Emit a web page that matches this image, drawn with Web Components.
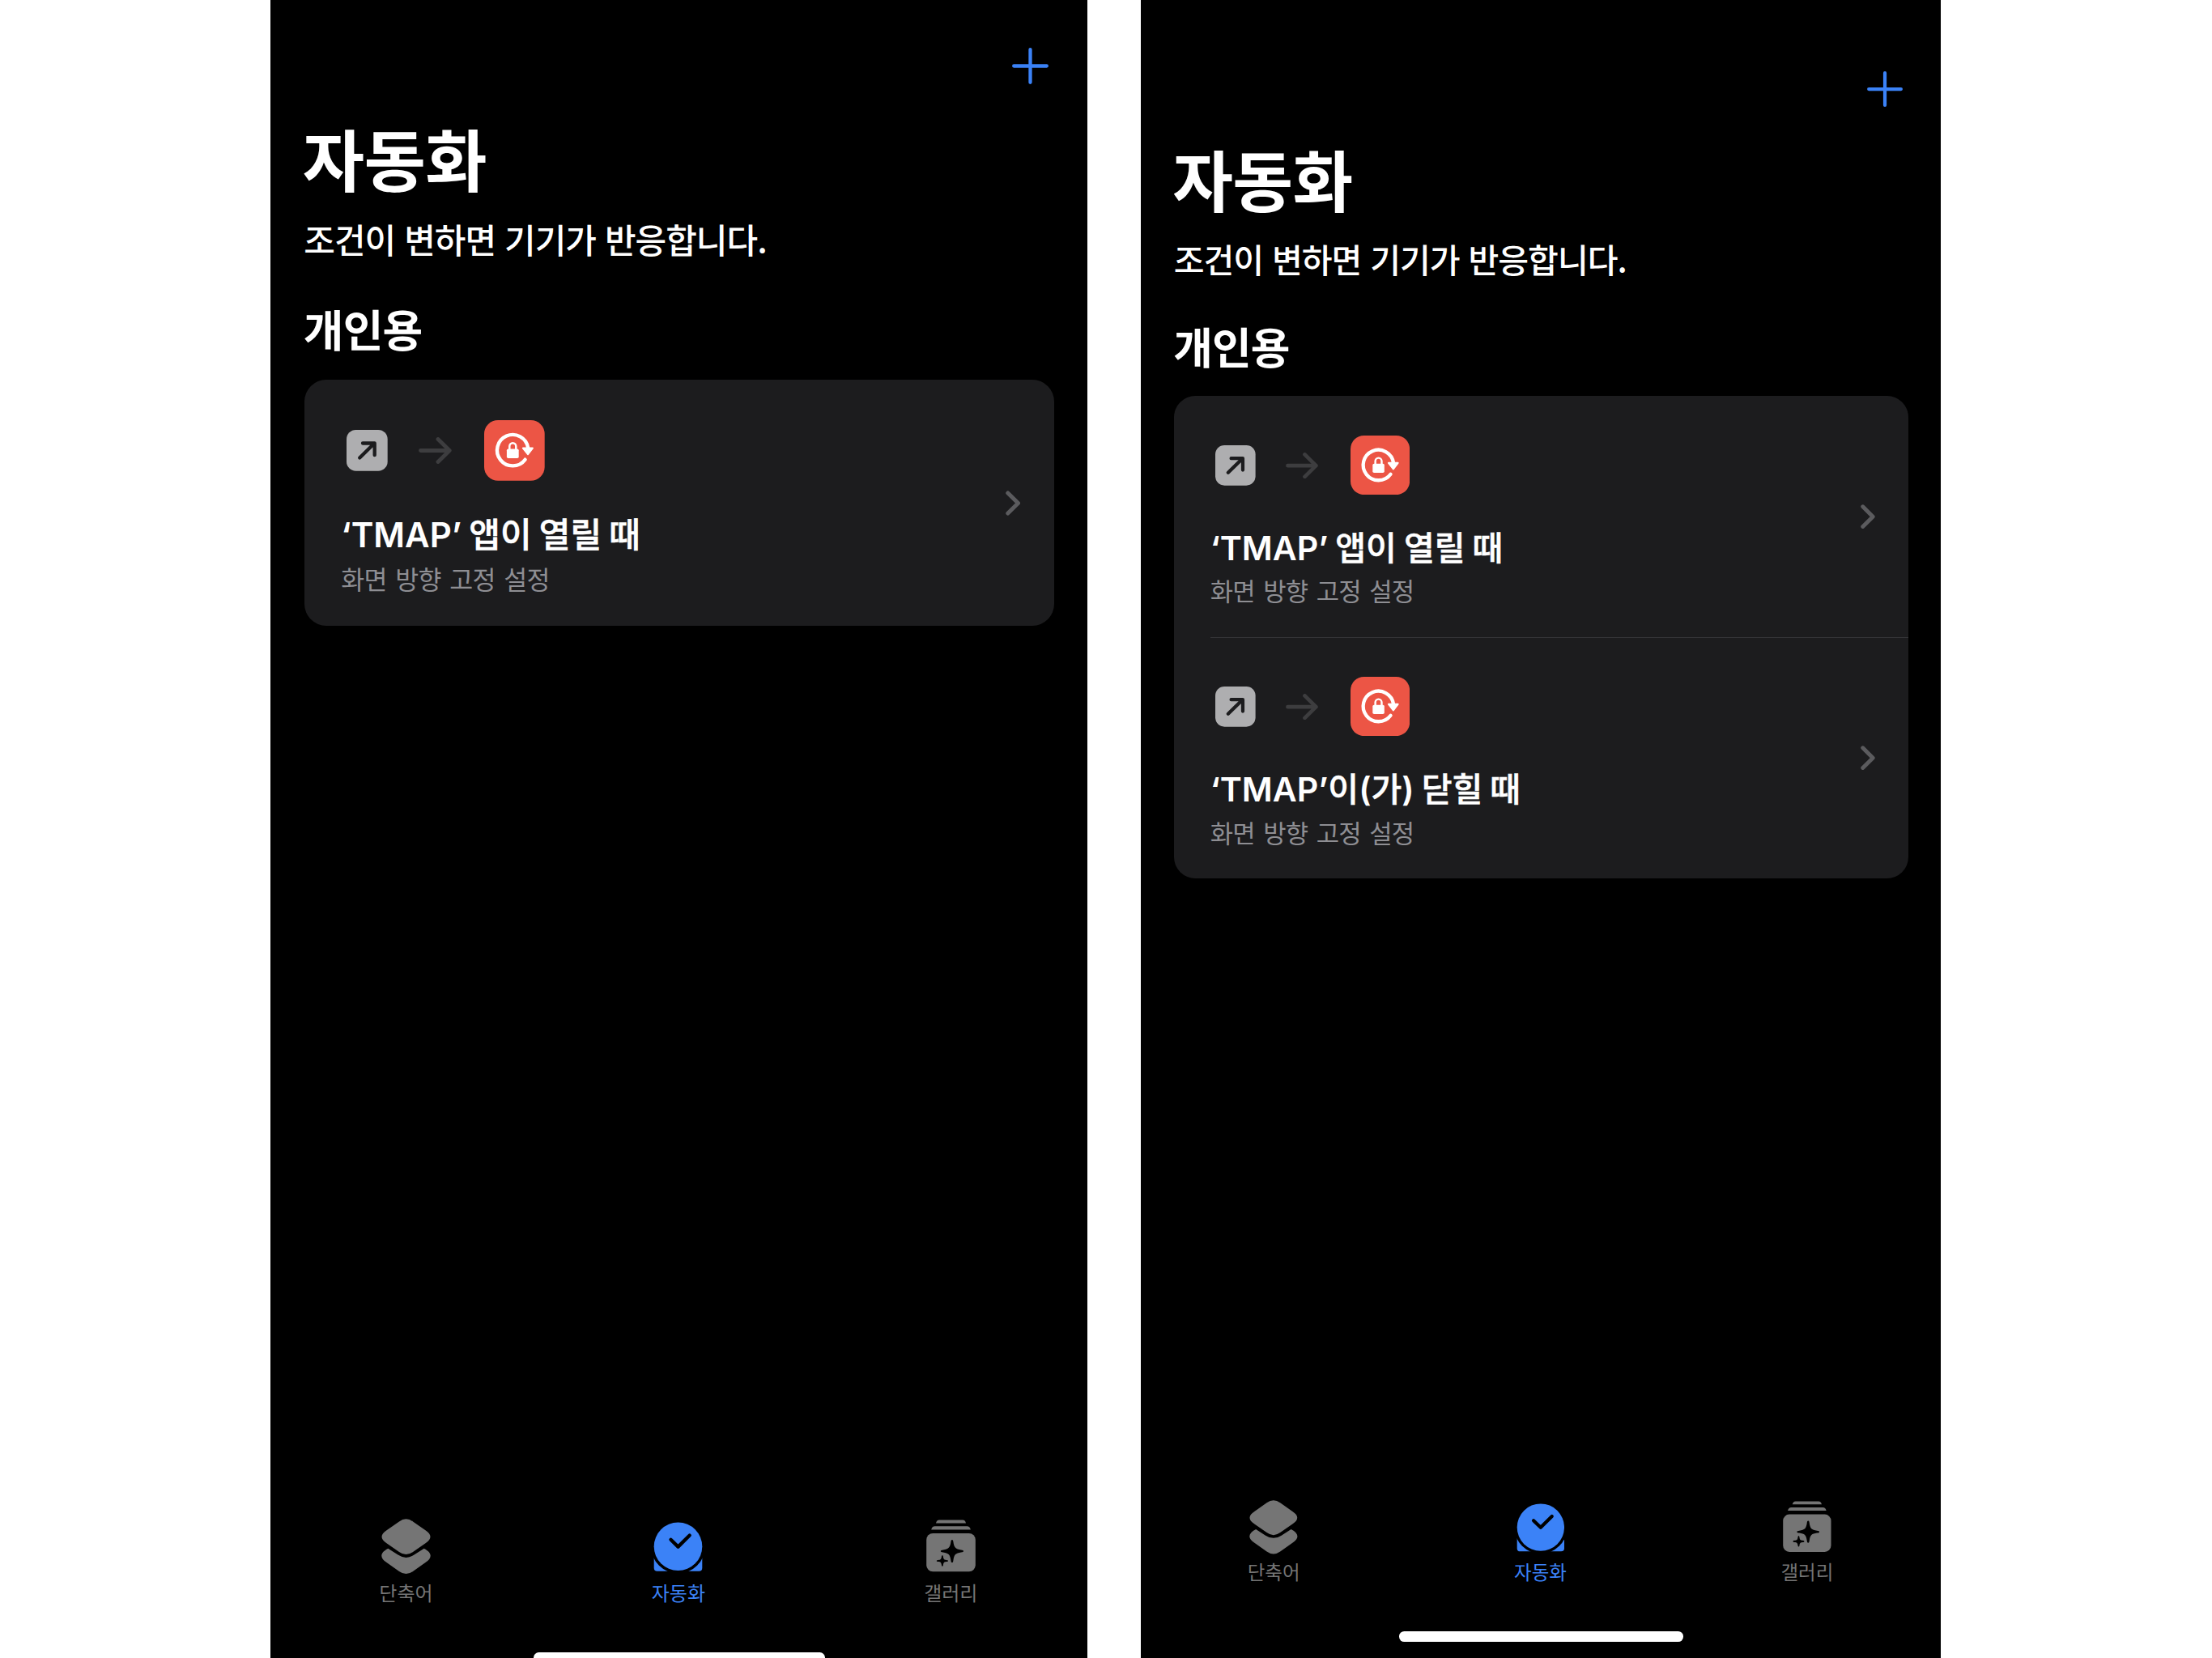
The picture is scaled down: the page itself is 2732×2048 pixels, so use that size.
<!DOCTYPE html>
<html lang="ko">
<head>
<meta charset="utf-8">
<title>자동화</title>
<style>
    body {
        margin: 0;
        height: 2048px;
        padding-left: 334.3px;
        display: flex;
        gap: 66px;
        background: #fff;
        overflow: hidden;
    }

    phone-screen.first {
        --u: 1px;
        --top: 0px;
        --foot: -6.3px;
    }

    phone-screen.second {
        --u: .979px;
        --top: 30px;
        --foot: 20.3px;
    }
</style>
</head>
<body>

<phone-screen class="first">
    <automation-list heading="개인용">
        <automation-row label="‘TMAP’ 앱이 열릴 때" action="화면 방향 고정 설정"></automation-row>
    </automation-list>
</phone-screen>

<phone-screen class="second">
    <automation-list heading="개인용">
        <automation-row label="‘TMAP’ 앱이 열릴 때" action="화면 방향 고정 설정"></automation-row>
        <automation-row label="‘TMAP’이(가) 닫힐 때" action="화면 방향 고정 설정"></automation-row>
    </automation-list>
</phone-screen>

<script>
// every length is a multiple of --u, so a screen scales as a whole
customElements.define('phone-screen', class extends HTMLElement {

    constructor() {
        super();
        let shadowRoot = this.attachShadow({mode: 'open'});
        shadowRoot.innerHTML = `
            <style>
                :host {
                    display: flex;
                    flex-direction: column;
                    box-sizing: border-box;
                    width: calc(var(--u) * 1009.2);
                    height: 2048px;
                    padding-top: var(--top);
                    overflow: hidden;
                    background: #000;
                    color: #fff;
                    font-family: Inter, "Noto Sans CJK KR", sans-serif;
                    white-space: nowrap;
                }

                nav {
                    box-sizing: border-box;
                    height: calc(var(--u) * 143.8);
                    padding: calc(var(--u) * 58.9) calc(var(--u) * 48.2) 0 0;
                    display: flex;
                    justify-content: flex-end;
                }

                nav svg {
                    width: calc(var(--u) * 45);
                    height: calc(var(--u) * 45);
                }

                main {
                    padding: 0 calc(var(--u) * 41.5);
                }

                h1, p {
                    margin: 0;
                    font-family: "Noto Sans CJK KR", sans-serif;
                }

                h1 {
                    font-size: calc(var(--u) * 83);
                    line-height: calc(var(--u) * 100);
                    font-weight: 700;
                    letter-spacing: calc(var(--u) * -.6);
                    margin-left: calc(var(--u) * -2);
                }

                p {
                    margin-top: calc(var(--u) * 26.6);
                    font-size: calc(var(--u) * 42);
                    line-height: calc(var(--u) * 50);
                    font-weight: 500;
                    letter-spacing: calc(var(--u) * -1);
                    word-spacing: calc(var(--u) * .2);
                    margin-left: calc(var(--u) * -.5);
                }

                tab-bar {
                    margin: auto calc(var(--u) * 1) 0 calc(var(--u) * -1);
                }

                .home {
                    flex: none;
                    align-self: center;
                    width: calc(var(--u) * 359.5);
                    height: calc(var(--u) * 13);
                    margin: calc(var(--u) * 59.7) 0 var(--foot);
                    border-radius: calc(var(--u) * 6.5);
                    background: #fff;
                }
            </style>

            <nav>
                <svg viewBox="0 0 45 45" fill="none" stroke="#3b82f7" stroke-width="4.3" stroke-linecap="round">
                    <path d="M22.5 2.2v40.600M2.200 22.500h40.600"/>
                </svg>
            </nav>
            <main>
                <h1>자동화</h1>
                <p>조건이 변하면 기기가 반응합니다.</p>
                <slot></slot>
            </main>
            <tab-bar></tab-bar>
            <div class="home"></div>
        `;
    }
});

customElements.define('automation-list', class extends HTMLElement {

    constructor() {
        super();
        let shadowRoot = this.attachShadow({mode: 'open'});
        shadowRoot.innerHTML = `
            <style>
                :host {
                    display: block;
                }

                h2 {
                    margin: calc(var(--u) * 55.4) 0 calc(var(--u) * 33) calc(var(--u) * -1);
                    font-family: "Noto Sans CJK KR", sans-serif;
                    font-size: calc(var(--u) * 54);
                    line-height: calc(var(--u) * 60);
                    font-weight: 700;
                    letter-spacing: calc(var(--u) * -.8);
                }

                .card {
                    border-radius: calc(var(--u) * 27);
                    background: #1c1c1e;
                    overflow: hidden;
                }

                ::slotted(automation-row:not(:first-child)) {
                    --divider: #343437;
                }
            </style>

            <h2></h2>
            <div class="card"><slot></slot></div>
        `;
    }

    connectedCallback() {
        this.shadowRoot.querySelector('h2').textContent = this.getAttribute('heading');
    }
});

customElements.define('automation-row', class extends HTMLElement {

    constructor() {
        super();
        let shadowRoot = this.attachShadow({mode: 'open'});
        shadowRoot.innerHTML = `
            <style>
                :host {
                    display: block;
                    padding-left: calc(var(--u) * 45.5);
                }

                .row {
                    box-sizing: border-box;
                    height: calc(var(--u) * 304.5);
                    padding: calc(var(--u) * 49.3) calc(var(--u) * 41.6) 0 0;
                    border-top: 1px solid var(--divider, transparent);
                    display: grid;
                    grid-template-columns: 1fr auto;
                }

                .flow {
                    display: flex;
                    align-items: center;
                    height: calc(var(--u) * 74.7);
                    padding-left: calc(var(--u) * 6.8);
                }

                svg {
                    display: block;
                    flex: none;
                }

                .trigger {
                    width: calc(var(--u) * 50.7);
                    height: calc(var(--u) * 50.7);
                }

                .arrow {
                    width: calc(var(--u) * 41);
                    height: calc(var(--u) * 33);
                    margin: calc(var(--u) * 1) calc(var(--u) * 40.8) 0 calc(var(--u) * 37.8);
                }

                .lock {
                    width: calc(var(--u) * 74.7);
                    height: calc(var(--u) * 74.7);
                }

                .label {
                    margin-top: calc(var(--u) * 42.7);
                    font-size: calc(var(--u) * 42);
                    line-height: calc(var(--u) * 50);
                    font-weight: 600;
                    word-spacing: calc(var(--u) * -1.4);
                }

                /* Noto has no semibold, so medium gets a thin outline */
                .label span {
                    font-weight: 500;
                    -webkit-text-stroke: calc(var(--u) * .6) currentColor;
                }

                .action {
                    margin-top: calc(var(--u) * 7.6);
                    font-family: "Noto Sans CJK KR", sans-serif;
                    font-size: calc(var(--u) * 31.5);
                    line-height: calc(var(--u) * 40);
                    letter-spacing: calc(var(--u) * -.8);
                    word-spacing: calc(var(--u) * 2.6);
                    color: #8e8e93;
                }

                .chevron {
                    width: calc(var(--u) * 18.5);
                    height: calc(var(--u) * 31);
                    margin-top: calc(var(--u) * 86.5);
                }
            </style>

            <div class="row">
                <div>
                    <div class="flow">
                        <svg class="trigger" viewBox="0 0 50.7 50.7">
                            <rect width="50.7" height="50.7" rx="11.5" fill="#aeaeb0"/>
                            <path d="M16.2 34.600L34.500 16.500M20 16.500h14.700v14.700" fill="none" stroke="#1c1c1e" stroke-width="4.3" stroke-linecap="round" stroke-linejoin="round"/>
                        </svg>
                        <svg class="arrow" viewBox="0 0 41 33" fill="none" stroke="#3d3d3f" stroke-width="4.8" stroke-linecap="round" stroke-linejoin="round">
                            <path d="M2.5 16.5h35.7M24 2.500l14.200 14L24 30.500"/>
                        </svg>
                        <svg class="lock" viewBox="0 0 74.7 74.7">
                            <rect width="74.7" height="74.7" rx="17" fill="#ec5545"/>
                            <path d="M50.6 48.700A19.200 19.200 0 1 1 54.200 34.400" fill="none" stroke="#fff" stroke-width="4.4" stroke-linecap="round"/>
                            <path d="M48 34.500h11.800L54 42.200z" fill="#fff" stroke="#fff" stroke-width="2.2" stroke-linejoin="round"/>
                            <rect x="27.9" y="35.4" width="14.8" height="11.6" rx="1.8" fill="#fff"/>
                            <path d="M31.300 36.500v-4.300a4 4 0 0 1 8 0v4.300" fill="none" stroke="#fff" stroke-width="2.5"/>
                        </svg>
                    </div>
                    <div class="label"></div>
                    <div class="action"></div>
                </div>
                <svg class="chevron" viewBox="0 0 18.5 31" fill="none" stroke="#5b5b5e" stroke-width="5" stroke-linecap="round" stroke-linejoin="round">
                    <path d="M2.800 2.900l12.700 12.600L2.800 28.100"/>
                </svg>
            </div>
        `;
    }

    connectedCallback() {
        const row = this.shadowRoot;

        row.querySelector('.label').innerHTML = this.getAttribute('label').replace(/[가-힣]+/g, '<span>$&</span>');
        row.querySelector('.action').textContent = this.getAttribute('action');
    }
});

customElements.define('tab-bar', class extends HTMLElement {

    constructor() {
        super();
        let shadowRoot = this.attachShadow({mode: 'open'});
        shadowRoot.innerHTML = `
            <style>
                :host {
                    display: grid;
                    grid-template-columns: repeat(3, 1fr);
                }

                .tab {
                    display: flex;
                    flex-direction: column;
                    align-items: center;
                    gap: calc(var(--u) * 6.6);
                    color: #757575;
                    font-family: "Noto Sans CJK KR", sans-serif;
                    font-size: calc(var(--u) * 24);
                    line-height: calc(var(--u) * 30);
                    font-weight: 400;
                }

                .tab.active {
                    color: #3b82f7;
                }

                svg {
                    width: calc(var(--u) * 61);
                    height: calc(var(--u) * 70);
                    fill: currentColor;
                }
            </style>

            <div class="tab">
                <svg viewBox="0 0 61 70">
                    <g transform="translate(.5 1)">
                        <path d="M21.5 3.4Q30 -2.8 38.5 3.4L54 14.3Q66 22.2 54 30.2L38.5 41Q30 47.2 21.5 41L6 30.2Q-6 22.2 6 14.3z"/>
                        <path d="M7.8 36.8C-2.3 42 -2.8 48.4 6 54L21.5 64.9Q30 71 38.5 64.9L54 54C62.8 48.4 62.3 42 52.2 36.8L40 44.6Q30 51.2 20 44.6z"/>
                    </g>
                </svg>
                <span>단축어</span>
            </div>
            <div class="tab active">
                <svg viewBox="0 0 61 70">
                    <rect x=".7" y="40" width="59.6" height="25.7" rx="4"/>
                    <circle cx="30.5" cy="35.3" r="33.3" fill="#000"/>
                    <circle cx="30.5" cy="35.3" r="29.8"/>
                    <path d="M21.5 26.7l9 8.9L44.7 21.5" fill="none" stroke="#000" stroke-width="4.3" stroke-linecap="round" stroke-linejoin="round"/>
                </svg>
                <span>자동화</span>
            </div>
            <div class="tab">
                <svg viewBox="0 0 61 70">
                    <path d="M12 6.4Q12.8 2.5 16 2.5h29Q48.2 2.5 49 6.4z"/>
                    <path d="M6.2 14.4Q7.2 10.3 10.6 10.3h39.8Q53.8 10.3 54.8 14.4z"/>
                    <rect x=".2" y="19" width="60.6" height="47.3" rx="8"/>
                    <path fill="#000" d="M31.9 27c1.1 0 1.3 1 1.5 2.6 1 7.2 2.9 9 9.6 9.9 2 .3 3 .5 3 1.500s-1 1.200-3 1.500c-6.700.9-8.600 2.700-9.600 9.900-.2 1.600-.4 2.600-1.500 2.600s-1.300-1-1.500-2.600c-1-7.200-2.900-9-9.600-9.900-2-.3-3-.5-3-1.500s1-1.200 3-1.500c6.700-.9 8.600-2.700 9.600-9.900.2-1.600.4-2.600 1.500-2.600z"/>
                    <path fill="#000" d="M19.900 46.200c.7 0 .9.700 1 1.700.4 3 1.300 3.700 4 4 1.300.2 2.100.4 2.100 1.100s-.8.9-2.100 1.100c-2.700.3-3.600 1-4 4-.1 1-.3 1.700-1 1.700s-.9-.7-1-1.700c-.4-3-1.300-3.700-4-4-1.300-.2-2.100-.4-2.100-1.100s.8-.9 2.100-1.100c2.700-.3 3.600-1 4-4 .1-1 .3-1.700 1-1.700z"/>
                </svg>
                <span>갤러리</span>
            </div>
        `;
    }
});
</script>
</body>
</html>
